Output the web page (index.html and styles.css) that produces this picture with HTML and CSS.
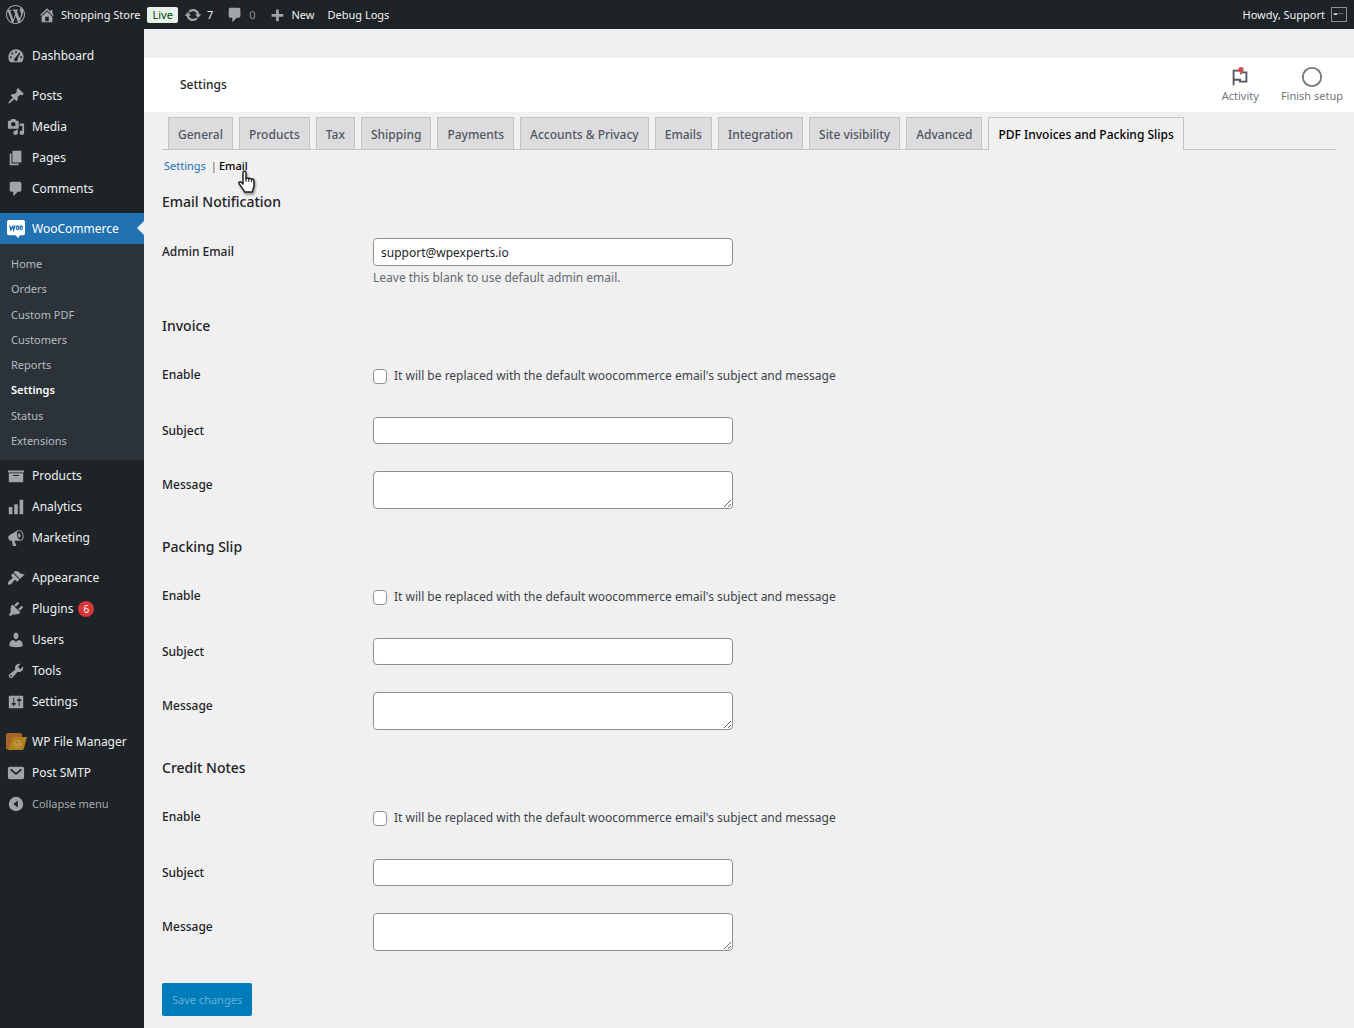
FILE: index.html
```html
<!DOCTYPE html>
<html lang="en">
<head>
<meta charset="utf-8">
<meta name="viewport" content="width=device-width, initial-scale=1">
<title>Settings - Shopping Store</title>
<link rel="stylesheet" href="styles.css">
</head>
<body>
<header class="adminbar">
  <nav class="adminbar-nav" aria-label="Toolbar">
    <a href="#" class="bar-logo" aria-label="About WordPress"><svg class="icon-logo" viewBox="0 0 20 20"><path d="M20 10c0-5.51-4.49-10-10-10C4.48 0 0 4.49 0 10c0 5.52 4.48 10 10 10 5.51 0 10-4.48 10-10zM7.78 15.37L4.37 6.22c.55-.02 1.17-.08 1.17-.08.5-.06.44-1.13-.06-1.11 0 0-1.45.11-2.37.11-.18 0-.37 0-.58-.01C4.12 2.69 6.87 1.11 10 1.11c2.33 0 4.45.87 6.05 2.34-.68-.11-1.65.39-1.65 1.58 0 .74.45 1.36.9 2.1.35.61.55 1.36.55 2.46 0 1.49-1.4 5-1.4 5l-3.03-8.37c.54-.02.82-.17.82-.17.5-.05.44-1.25-.06-1.22 0 0-1.44.12-2.38.12-.87 0-2.33-.12-2.33-.12-.5-.03-.56 1.2-.06 1.22l.92.08 1.26 3.41zM17.41 10c.24-.64.74-1.87.43-4.25.7 1.29 1.05 2.71 1.05 4.25 0 3.29-1.73 6.24-4.4 7.78.97-2.59 1.94-5.2 2.92-7.78zM6.1 18.09C3.12 16.65 1.11 13.53 1.11 10c0-1.3.23-2.48.72-3.59C3.25 10.3 4.67 14.2 6.1 18.09zm4.03-6.63l2.58 6.98c-.86.29-1.76.45-2.71.45-.79 0-1.57-.11-2.29-.33.81-2.38 1.62-4.74 2.42-7.1z"/></svg></a>
    <a href="#" class="bar-site"><svg class="icon" viewBox="0 0 20 20"><path d="M16 8.5l1.53 1.53-1.06 1.06L10 4.6l-6.47 6.49-1.06-1.06L10 2.5l4 4v-2h2v4zm-6-2.46l6 5.99V18H4v-5.97zM12 17v-5H8v5h4z"/></svg>Shopping Store</a>
    <a href="#" class="bar-live">Live</a>
    <a href="#" class="bar-item"><svg class="icon" viewBox="0 0 20 20"><path d="M10.2 3.28c3.53 0 6.43 2.61 6.92 6h2.08l-3.5 4-3.5-4h2.32c-.45-1.97-2.21-3.45-4.32-3.45-1.45 0-2.73.71-3.54 1.78L4.95 5.66C6.23 4.2 8.11 3.28 10.2 3.28zm-.4 13.44c-3.52 0-6.43-2.61-6.92-6H.8l3.5-4c1.17 1.33 2.33 2.67 3.5 4H5.48c.45 1.97 2.21 3.45 4.32 3.45 1.45 0 2.73-.71 3.54-1.78l1.71 1.95c-1.28 1.46-3.15 2.38-5.25 2.38z"/></svg>7</a>
    <a href="#" class="bar-item bar-muted"><svg class="icon" viewBox="0 0 20 20"><path d="M5 2h9c1.1 0 2 .9 2 2v7c0 1.1-.9 2-2 2h-2l-5 5v-5H5c-1.1 0-2-.9-2-2V4c0-1.1.9-2 2-2z"/></svg>0</a>
    <a href="#" class="bar-item"><svg class="icon" viewBox="0 0 20 20"><path d="M17 9v3h-5v5H9v-5H4V9h5V4h3v5h5z"/></svg>New</a>
    <a href="#" class="bar-item">Debug Logs</a>
  </nav>
  <a href="#" class="bar-account">Howdy, Support<span class="avatar"><svg viewBox="0 0 16 15"><path fill="#ddd" d="M2 6h4v2H2z"/><path fill="#777" d="M7 6h6v1H7z"/></svg></span></a>
</header>
<div class="layout">
  <nav class="sidebar" aria-label="Main menu">
    <ul class="menu">
      <li><a href="#"><svg class="icon" viewBox="0 0 20 20"><path d="M3.76 17h12.48A9 9 0 0 0 18.5 11a8.5 8.5 0 0 0-17 0c0 2.3.8 4.4 2.26 6z"/><g fill="#1d2327"><circle cx="10" cy="5.5" r="1.1"/><circle cx="5.8" cy="7.3" r="1.1"/><circle cx="4.3" cy="11.5" r="1.1"/><circle cx="15.7" cy="11.5" r="1.1"/><path d="M13.8 6l1 .6-3 6.5a2 2 0 1 1-2.5-1.2z"/></g></svg>Dashboard</a></li>
    </ul>
    <ul class="menu">
      <li><a href="#"><svg class="icon" viewBox="0 0 20 20"><path d="M10.44 3.02l1.82-1.82 6.36 6.35-1.83 1.82c-1.05-.68-2.48-.57-3.41.36l-.75.75c-.92.93-1.04 2.35-.35 3.41l-1.83 1.82-2.41-2.41-2.8 2.79c-.42.42-3.38 2.71-3.8 2.29s1.86-3.39 2.28-3.81l2.79-2.79L4.1 9.36l1.83-1.82c1.05.69 2.48.57 3.4-.36l.75-.75c.93-.92 1.05-2.35.36-3.41z"/></svg>Posts</a></li>
      <li><a href="#"><svg class="icon" viewBox="0 0 20 20"><path d="M13 11V4c0-.55-.45-1-1-1h-1.67L9 1H5L3.67 3H2c-.55 0-1 .45-1 1v7c0 .55.45 1 1 1h10c.55 0 1-.45 1-1zM7 4.5c1.38 0 2.5 1.12 2.5 2.5S8.38 9.5 7 9.5 4.5 8.38 4.5 7 5.62 4.5 7 4.5zM14 6h5v10.5c0 1.38-1.12 2.5-2.5 2.5S14 17.88 14 16.5s1.12-2.5 2.5-2.5c.17 0 .34.02.5.05V9h-3V6zm-4 8.05V13h2v3.5c0 1.38-1.12 2.5-2.5 2.5S7 17.88 7 16.5 8.12 14 9.5 14c.17 0 .34.02.5.05z"/></svg>Media</a></li>
      <li><a href="#"><svg class="icon" viewBox="0 0 20 20"><path d="M6 15V2h10v13H6zm-1 1h8v2H3V5h2v11z"/></svg>Pages</a></li>
      <li><a href="#"><svg class="icon" viewBox="0 0 20 20"><path d="M5 2h9c1.1 0 2 .9 2 2v7c0 1.1-.9 2-2 2h-2l-5 5v-5H5c-1.1 0-2-.9-2-2V4c0-1.1.9-2 2-2z"/></svg>Comments</a></li>
    </ul>
    <ul class="menu">
      <li>
        <a href="#" class="current"><svg class="icon" viewBox="0 0 20 20"><path fill="#fff" d="M2 0h16a2 2 0 0 1 2 2v13a2 2 0 0 1-2 2h-4l-1 3-4-3H2a2 2 0 0 1-2-2V2a2 2 0 0 1 2-2z"/><g fill="none" stroke="#2271b1" stroke-width="1.5"><path d="M3 6l1.2 5L6.500 7l1 4L9 6"/><ellipse cx="11.8" cy="8.7" rx="1.3" ry="2"/><ellipse cx="15.8" cy="8.7" rx="1.3" ry="2"/></g></svg>WooCommerce</a>
        <ul class="submenu">
          <li><a href="#">Home</a></li>
          <li><a href="#">Orders</a></li>
          <li><a href="#">Custom PDF</a></li>
          <li><a href="#">Customers</a></li>
          <li><a href="#">Reports</a></li>
          <li><a href="#" class="active">Settings</a></li>
          <li><a href="#">Status</a></li>
          <li><a href="#">Extensions</a></li>
        </ul>
      </li>
      <li><a href="#"><svg class="icon" viewBox="0 0 20 20"><path d="M19 4v2H1V4h18zM2 7h16v10H2V7zm11 3V9H7v1h6z"/></svg>Products</a></li>
      <li><a href="#"><svg class="icon" viewBox="0 0 20 20"><path d="M18 18V2h-4v16h4zm-6 0V7H8v11h4zm-6 0v-8H2v8h4z"/></svg>Analytics</a></li>
      <li><a href="#"><svg class="icon" viewBox="0 0 20 20"><path d="M18.15 5.94c.46 1.62.38 3.22-.02 4.48-.42 1.28-1.26 2.18-2.3 2.48-.16.06-.26.06-.4.06-.06.02-.12.02-.18.02-.06.02-.14.02-.22.02h-6.8l2.22 5.5c.02.14-.06.26-.14.34-.08.1-.24.16-.34.16H6.95c-.1 0-.26-.06-.34-.16-.08-.08-.16-.2-.14-.34l-1-5.5H4.25l-.02-.02c-.5.06-1.08-.18-1.54-.62s-.88-1.08-1.06-1.88c-.24-.8-.2-1.56-.02-2.2.18-.62.58-1.08 1.06-1.3l.02-.02 9-5.4c.1-.06.18-.1.24-.16.06-.04.14-.08.24-.12.16-.08.28-.12.5-.18 1.04-.3 2.24.1 3.22.98s1.84 2.24 2.26 3.86zm-2.58 5.98h-.02c.4-.1.74-.34 1.04-.7.58-.7.86-1.76.86-3.04 0-.64-.1-1.3-.28-1.98-.34-1.36-1.02-2.5-1.78-3.24s-1.68-1.1-2.46-.88c-.82.22-1.4.96-1.7 2-.32 1.04-.28 2.36.06 3.72.38 1.36 1 2.5 1.8 3.24.78.74 1.62 1.1 2.48.88zm-2.54-7.08c.22-.04.42-.02.62.04.38.16.76.48 1.02 1s.42 1.2.42 1.78c0 .3-.04.56-.12.8-.18.48-.44.84-.86.94-.34.1-.8-.06-1.14-.4s-.64-.86-.78-1.5c-.18-.62-.12-1.24.02-1.72s.48-.84.82-.94z"/></svg>Marketing</a></li>
    </ul>
    <ul class="menu">
      <li><a href="#"><svg class="icon" viewBox="0 0 20 20"><path d="M14.48 11.06L7.41 3.99l1.5-1.5c.5-.56 2.3-.47 3.51.32 1.21.8 1.43 1.28 2.91 2.1 1.18.64 2.45 1.26 4.45.85zm-.71.71L6.7 4.7 4.93 6.47c-.39.39-.39 1.02 0 1.41l1.06 1.06c.39.39.39 1.03 0 1.42-.6.6-1.43 1.11-2.21 1.69-.35.26-.7.53-1.01.84C1.43 14.23.4 16.08 1.4 17.07c.99 1 2.84-.03 4.18-1.36.31-.31.58-.66.85-1.02.57-.78 1.08-1.61 1.69-2.21.39-.39 1.02-.39 1.41 0l1.06 1.06c.39.39 1.02.39 1.41 0z"/></svg>Appearance</a></li>
      <li><a href="#"><svg class="icon" viewBox="0 0 20 20"><path d="M13.11 4.36L9.87 7.6 8 5.73l3.24-3.24c.35-.34 1.05-.2 1.56.32.52.51.66 1.21.31 1.55zm-8 1.77l.91-1.12 9.01 9.01-1.19.84c-.71.71-2.63 1.16-3.82 1.16H6.14L4.9 17.26c-.59.59-1.54.59-2.12 0-.59-.58-.59-1.53 0-2.12l1.24-1.24v-3.88c0-1.13.4-3.19 1.09-3.89zm7.26 3.97l3.24-3.24c.34-.35 1.04-.21 1.55.31.52.51.66 1.21.31 1.55l-3.24 3.25z"/></svg>Plugins<span class="badge">6</span></a></li>
      <li><a href="#"><svg class="icon" viewBox="0 0 20 20"><path d="M10 9.25c-2.27 0-2.73-3.44-2.73-3.44C7 4.02 7.82 2 9.97 2c2.16 0 2.98 2.02 2.71 3.81 0 0-.41 3.44-2.68 3.44zm0 2.57L12.72 10c2.39 0 4.52 2.33 4.52 4.53v2.49s-3.65 1.13-7.24 1.13c-3.65 0-7.24-1.13-7.24-1.13v-2.49c0-2.25 1.94-4.48 4.47-4.48z"/></svg>Users</a></li>
      <li><a href="#"><svg class="icon" viewBox="0 0 20 20"><path d="M16.68 9.77c-1.34 1.34-3.3 1.67-4.95.99l-5.41 6.52c-.99.99-2.59.99-3.58 0s-.99-2.59 0-3.57l6.52-5.42c-.68-1.65-.35-3.61.99-4.95 1.28-1.28 3.12-1.62 4.72-1.06l-2.89 2.89 2.82 2.82 2.86-2.87c.53 1.58.18 3.39-1.08 4.65zM3.81 16.21c.4.39 1.04.39 1.43 0 .4-.4.4-1.04 0-1.43-.39-.4-1.03-.4-1.43 0-.39.39-.39 1.03 0 1.43z"/></svg>Tools</a></li>
      <li><a href="#"><svg class="icon" viewBox="0 0 20 20"><path d="M18 16V4c0-.55-.45-1-1-1H3c-.55 0-1 .45-1 1v12c0 .55.45 1 1 1h14c.55 0 1-.45 1-1zM8 11h1c.55 0 1 .45 1 1s-.45 1-1 1H8v1.5c0 .28-.22.5-.5.5s-.5-.22-.5-.5V13H6c-.55 0-1-.45-1-1s.45-1 1-1h1V5.5c0-.28.22-.5.5-.5s.5.22.5.5V11zm5-2h-1c-.55 0-1-.45-1-1s.45-1 1-1h1V5.5c0-.28.22-.5.5-.5s.5.22.5.5V7h1c.55 0 1 .45 1 1s-.45 1-1 1h-1v5.5c0 .28-.22.5-.5.5s-.5-.22-.5-.5V9z"/></svg>Settings</a></li>
    </ul>
    <ul class="menu">
      <li><a href="#" class="file-manager"><svg class="icon-folder" viewBox="0 0 22 18"><path fill="#a86428" d="M2 0h12a2 2 0 0 1 2 2v3l-8 11H0V2a2 2 0 0 1 2-2z"/><path fill="#b07f20" d="M8 4h13l-3 11a2 2 0 0 1-2 2H0a3 3 0 0 0 3-2L6 5.500A2 2 0 0 1 8 4z"/><circle cx="11.5" cy="11" r="3.5" fill="none" stroke="#c9a25c" stroke-width=".8"/><path d="M9.300 9.500l1.300 3.500 1-3 1 3 1.200-3.500" fill="none" stroke="#c9a25c" stroke-width=".8"/></svg>WP File Manager</a></li>
      <li><a href="#"><svg class="icon" viewBox="0 0 20 20"><path d="M3 3h14a2 2 0 0 1 2 2v10a2 2 0 0 1-2 2H3a2 2 0 0 1-2-2V5a2 2 0 0 1 2-2z"/><path d="M4 6l6 5 6-5" fill="none" stroke="#1d2327" stroke-width="2"/></svg>Post SMTP</a></li>
      <li><button type="button" class="collapse"><svg class="icon" viewBox="0 0 20 20"><circle cx="10" cy="10" r="8"/><path fill="#1d2327" d="M12 6v8l-5-4z"/></svg>Collapse menu</button></li>
    </ul>
  </nav>
  <main class="content">
    <div class="page-header">
      <h1>Settings</h1>
      <div class="header-actions">
        <button type="button"><svg class="icon-action" viewBox="0 0 24 24"><path fill="none" stroke="#50575e" stroke-width="2" d="M5 21V5h6M5 15h7v2h7V7h-5M13 9V7"/><circle cx="13" cy="4" r="3" fill="#d94f4f"/></svg>Activity</button>
        <button type="button"><svg class="icon-action" viewBox="0 0 24 24"><circle cx="12" cy="12" r="10" fill="#fff" stroke="#757575" stroke-width="2"/></svg>Finish setup</button>
      </div>
    </div>
    <div class="page-body">
      <nav class="tabs" aria-label="Settings sections">
        <a href="#">General</a>
        <a href="#">Products</a>
        <a href="#">Tax</a>
        <a href="#">Shipping</a>
        <a href="#">Payments</a>
        <a href="#">Accounts &amp; Privacy</a>
        <a href="#">Emails</a>
        <a href="#">Integration</a>
        <a href="#">Site visibility</a>
        <a href="#">Advanced</a>
        <a href="#" class="active">PDF Invoices and Packing Slips</a>
      </nav>
      <nav class="subtabs" aria-label="PDF sections">
        <a href="#">Settings</a><span class="divider">|</span><a href="#" class="active">Email<svg class="pointer" viewBox="0 0 20 24"><path fill="#fff" stroke="#222" stroke-width="1.5" stroke-linejoin="round" d="M6 2.500C6 .5 9 .5 9 2.500V9c0-1.500 2.800-1.500 2.800.2 0-1.300 2.700-1.200 2.700.6 0-1.200 2.500-1 2.500.7V15c0 3-1.500 4-1.500 7h-8c0-2-6-8-5.700-9.300.5-1.700 3-.7 4.200 1.300z"/><path stroke="#222" d="M9 8v4M11.800 9v3M14.500 10v2"/></svg></a>
      </nav>
      <form class="settings-form">
        <section>
          <h2>Email Notification</h2>
          <div class="row">
            <label for="admin-email">Admin Email</label>
            <div class="field"><input type="text" class="text" id="admin-email" value="support@wpexperts.io"><p class="hint">Leave this blank to use default admin email.</p></div>
          </div>
        </section>
        <section>
          <h2>Invoice</h2>
          <div class="row row-check">
            <label for="invoice-enable">Enable</label>
            <div class="check"><input type="checkbox" id="invoice-enable"><label for="invoice-enable">It will be replaced with the default woocommerce email's subject and message</label></div>
          </div>
          <div class="row"><label for="invoice-subject">Subject</label><input type="text" class="text" id="invoice-subject"></div>
          <div class="row"><label for="invoice-message">Message</label><textarea class="text" id="invoice-message"></textarea></div>
        </section>
        <section>
          <h2>Packing Slip</h2>
          <div class="row row-check">
            <label for="slip-enable">Enable</label>
            <div class="check"><input type="checkbox" id="slip-enable"><label for="slip-enable">It will be replaced with the default woocommerce email's subject and message</label></div>
          </div>
          <div class="row"><label for="slip-subject">Subject</label><input type="text" class="text" id="slip-subject"></div>
          <div class="row"><label for="slip-message">Message</label><textarea class="text" id="slip-message"></textarea></div>
        </section>
        <section>
          <h2>Credit Notes</h2>
          <div class="row row-check">
            <label for="credit-enable">Enable</label>
            <div class="check"><input type="checkbox" id="credit-enable"><label for="credit-enable">It will be replaced with the default woocommerce email's subject and message</label></div>
          </div>
          <div class="row"><label for="credit-subject">Subject</label><input type="text" class="text" id="credit-subject"></div>
          <div class="row"><label for="credit-message">Message</label><textarea class="text" id="credit-message"></textarea></div>
        </section>
        <button type="submit" class="save" disabled>Save changes</button>
      </form>
    </div>
  </main>
</div>
</body>
</html>
```

FILE: styles.css
```css
*, *::before, *::after { box-sizing: border-box; }

body {
  margin: 0;
  min-height: 100vh;
  display: flex;
  flex-direction: column;
  background: #f0f0f0;
  color: #1d2327;
  font: 12px/20px "Noto Sans", "Open Sans", sans-serif;
}

a { color: inherit; text-decoration: none; }
button, input, textarea { font: inherit; color: inherit; margin: 0; }
ul { list-style: none; margin: 0; padding: 0; }
h1, h2, p { margin: 0; }
svg { display: block; flex: none; }

.icon { width: 18px; height: 18px; fill: #a0a5aa; }

/* Top toolbar */
.adminbar {
  display: flex;
  justify-content: space-between;
  height: 29px;
  padding: 0 7px 0 6px;
  background: #1d2327;
  color: #f0f0f1;
  font-size: 11px;
}
.adminbar-nav, .adminbar a { display: flex; align-items: center; }
.icon-logo { width: 19px; height: 19px; fill: #a0a5aa; }
.bar-site { gap: 5px; margin-left: 13px; }
.adminbar .bar-live {
  height: 16px;
  margin: 0 6px 0 7px;
  padding: 0 5px;
  border-radius: 2px;
  background: #e6f2e8;
  color: #00450c;
}
.bar-item { gap: 5px; margin-right: 13px; }
.bar-muted { color: #8c9196; }
.bar-account { gap: 6px; }
.avatar { width: 16px; height: 15px; border: 1px solid #8c8f94; }

/* Page columns */
.layout { flex: 1; display: flex; }
.sidebar {
  width: 144px;
  flex: none;
  display: flex;
  flex-direction: column;
  gap: 9px;
  padding-top: 11px;
  background: #1d2327;
  color: #f0f0f1;
}
.menu > li > a, .collapse {
  position: relative;
  display: flex;
  align-items: center;
  gap: 7px;
  width: 100%;
  height: 31px;
  padding: 0 0 0 7px;
}
.menu > li > .current { background: #2271b1; color: #fff; }
.current::after {
  content: "";
  position: absolute;
  right: 0;
  top: 8px;
  border: 7px solid transparent;
  border-right-color: #f0f0f0;
  border-left: 0;
}
.submenu {
  display: grid;
  align-content: space-between;
  min-height: 216px;
  padding: 7px 0;
  background: #2c3338;
  color: #b5bbc1;
}
.submenu a { display: block; padding-left: 11px; font-size: 11px; line-height: 25px; }
.submenu .active { color: #fff; font-weight: 600; }
.badge {
  width: 16px;
  height: 16px;
  margin-left: -2px;
  border-radius: 8px;
  background: #d63638;
  color: #fff;
  font-size: 10px;
  line-height: 16px;
  text-align: center;
}
.menu > li > .file-manager { padding-left: 6px; gap: 4px; }
.icon-folder { width: 22px; height: 18px; }
.collapse { border: 0; background: none; color: #a7aaad; font-size: 11px; }

/* Main area */
.content { flex: 1; min-width: 0; padding-top: 29px; }
.page-header {
  display: flex;
  justify-content: space-between;
  align-items: center;
  height: 54px;
  padding: 0 11px 0 36px;
  background: #fff;
}
.page-header h1 { font-size: 12px; font-weight: 500; line-height: 22px; }
.header-actions { display: flex; gap: 22px; }
.header-actions button {
  display: flex;
  flex-direction: column;
  align-items: center;
  padding: 0;
  border: 0;
  background: none;
  color: #757575;
  font-size: 11px;
  line-height: 16px;
}
.icon-action { width: 22px; height: 22px; }

.page-body { padding: 5px 18px 12px; }
.tabs { display: flex; gap: 6px; padding-left: 6px; border-bottom: 1px solid #c3c4c7; }
.tabs a {
  height: 32px;
  padding: 0 9px;
  border: 1px solid #c3c4c7;
  border-bottom: 0;
  background: #dcdcde;
  color: #50575e;
  font-weight: 500;
  line-height: 34px;
  white-space: nowrap;
}
.tabs .active { height: 33px; margin-bottom: -1px; background: #f0f0f0; color: #000; }

.subtabs { display: flex; padding: 6px 2px 0; color: #2271b1; font-size: 11px; }
.subtabs .divider { padding: 0 2px 0 5px; color: #646970; }
.subtabs .active { position: relative; color: #000; font-weight: 500; }
.pointer { position: absolute; right: -9px; top: 14px; width: 20px; height: 24px; filter: drop-shadow(1px 2px 1px #0006); }

/* Form */
.settings-form { display: flex; flex-direction: column; align-items: flex-start; padding-top: 16px; }
.settings-form section { width: 100%; padding-bottom: 28px; }
.settings-form h2 { margin-bottom: 26px; font-size: 14px; font-weight: 500; }
.row { display: grid; grid-template-columns: 211px 1fr; align-items: start; }
.row > label { font-weight: 500; line-height: 27px; }
.row + .row { margin-top: 27px; }
.row-check { margin: 30px 0 31px; }
.row-check + .row { margin-top: 0; }
.row-check > label { line-height: 18px; }
.text {
  display: block;
  width: 100%;
  max-width: 360px;
  height: 27px;
  padding: 0 7px;
  border: 1px solid #8c8f94;
  border-radius: 4px;
  background: #fff;
  outline: none;
}
.field .text { height: 28px; }
textarea.text { height: 38px; resize: vertical; }
.hint { margin-top: 2px; color: #646970; }
.check { display: flex; align-items: center; gap: 7px; color: #3c434a; }
.check input {
  appearance: none;
  width: 14px;
  height: 15px;
  border: 1px solid #8c8f94;
  border-radius: 4px;
  background: #fff;
}
.save {
  margin-top: 4px;
  height: 33px;
  padding: 0 10px;
  border: 0;
  border-radius: 2px;
  background: #007cba;
  color: #66b0d6;
  font-size: 11px;
}
```
